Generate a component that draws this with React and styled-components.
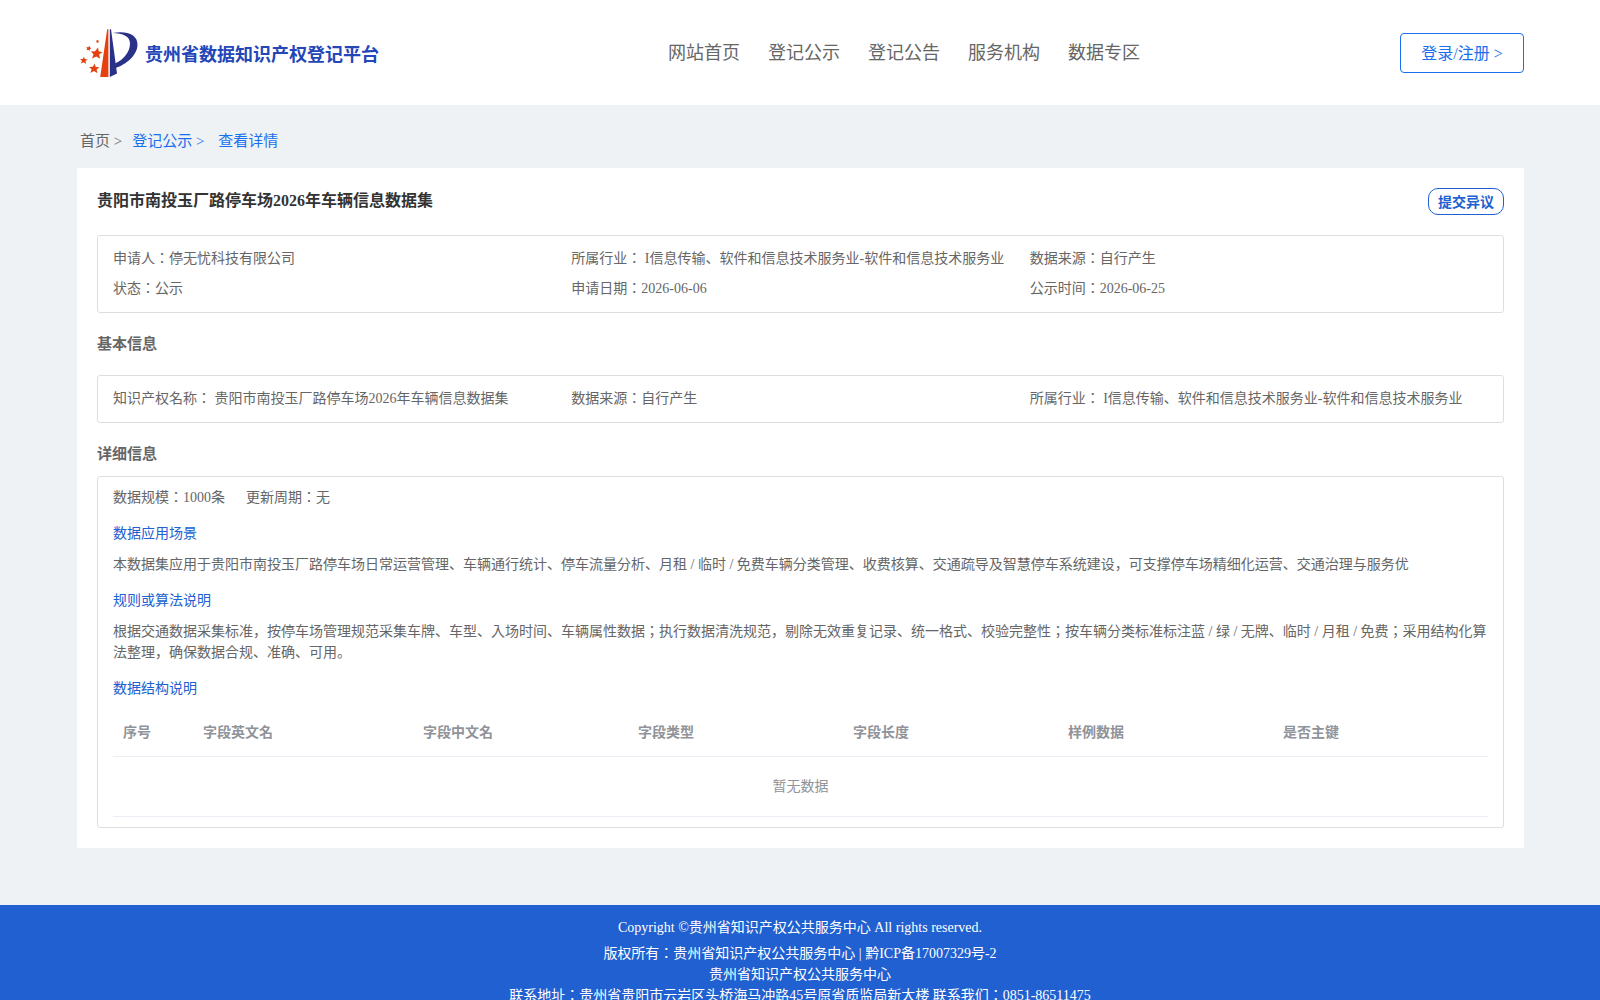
import styled, { createGlobalStyle } from "styled-components";

const navLinks = ["网站首页", "登记公示", "登记公告", "服务机构", "数据专区"];

const industry = "I信息传输、软件和信息技术服务业-软件和信息技术服务业";

const summary = [
  "申请人：停无忧科技有限公司",
  `所属行业： ${industry}`,
  "数据来源：自行产生",
  "状态：公示",
  "申请日期：2026-06-06",
  "公示时间：2026-06-25",
];

const basicInfo = [
  "知识产权名称： 贵阳市南投玉厂路停车场2026年车辆信息数据集",
  "数据来源：自行产生",
  `所属行业： ${industry}`,
];

const columns = [
  { name: "序号", width: "80px" },
  { name: "字段英文名", width: "220px" },
  { name: "字段中文名" },
  { name: "字段类型" },
  { name: "字段长度" },
  { name: "样例数据" },
  { name: "是否主键" },
];

const Logo = () => (
  <LogoSvg viewBox="0 0 58 50" aria-hidden="true">
    <path fill="#e5410f" d="M27.2 1.2 L28.4 1.2 V49 H20.2 Z" />
    <path fill="#2a3188" d="M29.8 1.2 L31 1.2 L37 45.5 L29.8 49 Z" />
    <path
      fill="#2a3188"
      d="M32.500 5 C46 2.500 57.800 6 57.500 17 C57.300 27 46.500 36.500 35.500 40 L35 35.500 C43 32 50 24.500 50 15.500 C50 8 43 5.500 32.500 5 Z"
    />
    <path
      fill="#e5410f"
      d="M18 19.500 L18.700 23.200 L22.500 24.200 L19.200 26.300 L20 30.700 L16.300 28.400 L12 30.500 L13.500 26.200 L10.800 23.600 L15 23.300 Z"
    />
    <path
      fill="#e5410f"
      d="M14.500 35.600 L15.700 39 L19.500 39.200 L16.600 41.500 L17.400 45.200 L14 43.100 L10.400 45 L11.600 41.300 L9 38.900 L12.900 38.800 Z"
    />
    <path
      fill="#e5410f"
      d="M4 28.700 L4.900 31.100 L7.600 31.400 L5.500 33.100 L6 36 L3.500 34.300 L0.800 35.500 L1.900 32.800 L0 30.900 L2.800 30.900 Z"
    />
    <path
      fill="#e5410f"
      d="M9.700 17.800 L10 19.500 L11.600 20.200 L10 21.100 L9.700 23 L8.300 21.700 L6.400 22.200 L7.200 20.500 L6.400 18.900 L8.300 19.200 Z"
    />
    <path fill="#e5410f" d="M17.500 12 L18.900 13 L18.300 14.700 L16.600 14.500 L16.200 12.800 Z" />
  </LogoSvg>
);

const App = () => {
  return (
    <>
      <GlobalStyle />
      <Header>
        <Brand>
          <Logo />
          <BrandName>贵州省数据知识产权登记平台</BrandName>
        </Brand>
        <Nav>
          {navLinks.map((link) => (
            <NavLink href="#" key={link}>
              {link}
            </NavLink>
          ))}
        </Nav>
        <LoginButton type="button">登录/注册 &gt;</LoginButton>
      </Header>

      <Main>
        <Breadcrumb>
          <Crumb href="#">首页 &gt;</Crumb>
          <Crumb href="#" $active>
            登记公示 &gt;&nbsp;
          </Crumb>
          <Crumb href="#" $active>
            查看详情
          </Crumb>
        </Breadcrumb>

        <Card>
          <TitleRow>
            <Title>贵阳市南投玉厂路停车场2026年车辆信息数据集</Title>
            <ObjectionButton type="button">提交异议</ObjectionButton>
          </TitleRow>
          <InfoBox>
            {summary.map((item) => (
              <InfoItem key={item}>{item}</InfoItem>
            ))}
          </InfoBox>

          <SectionTitle $gap="20px">基本信息</SectionTitle>
          <InfoBox>
            {basicInfo.map((item) => (
              <InfoItem key={item}>{item}</InfoItem>
            ))}
          </InfoBox>

          <SectionTitle $gap="11px">详细信息</SectionTitle>
          <DetailBox>
            <Meta>
              <span>数据规模：1000条</span>
              <span>更新周期：无</span>
            </Meta>
            <SubTitle>数据应用场景</SubTitle>
            <Text>
              本数据集应用于贵阳市南投玉厂路停车场日常运营管理、车辆通行统计、停车流量分析、月租 / 临时 / 免费车辆分类管理、收费核算、交通疏导及智慧停车系统建设，可支撑停车场精细化运营、交通治理与服务优
            </Text>
            <SubTitle>规则或算法说明</SubTitle>
            <Text>
              根据交通数据采集标准，按停车场管理规范采集车牌、车型、入场时间、车辆属性数据；执行数据清洗规范，剔除无效重复记录、统一格式、校验完整性；按车辆分类标准标注蓝 / 绿 / 无牌、临时 / 月租 / 免费；采用结构化算法整理，确保数据合规、准确、可用。
            </Text>
            <SubTitle>数据结构说明</SubTitle>
            <Table>
              <thead>
                <tr>
                  {columns.map((col) => (
                    <Th key={col.name} $width={col.width}>
                      {col.name}
                    </Th>
                  ))}
                </tr>
              </thead>
              <tbody>
                <tr>
                  <Empty colSpan={columns.length}>暂无数据</Empty>
                </tr>
              </tbody>
            </Table>
          </DetailBox>
        </Card>
      </Main>

      <Footer>
        <Copyright>Copyright ©贵州省知识产权公共服务中心 All rights reserved.</Copyright>
        <p>版权所有：贵州省知识产权公共服务中心 | 黔ICP备17007329号-2</p>
        <p>贵州省知识产权公共服务中心</p>
        <p>联系地址：贵州省贵阳市云岩区头桥海马冲路45号原省质监局新大楼 联系我们：0851-86511475</p>
      </Footer>
    </>
  );
};

const GlobalStyle = createGlobalStyle`
  * {
    box-sizing: border-box;
  }
  body {
    margin: 0;
    background: #eef2f5;
    color: #666;
    font-family: "Liberation Serif", "Noto Sans CJK JP", "Noto Sans CJK SC", serif;
    font-size: 14px;
    line-height: 21px;
  }
  h1, h2, h3, p {
    margin: 0;
  }
  a {
    text-decoration: none;
  }
  button {
    font-family: inherit;
    background: #fff;
    cursor: pointer;
  }
`;

const Header = styled.header`
  display: flex;
  align-items: center;
  justify-content: space-between;
  height: 105px;
  padding: 0 76px 0 77px;
  background: #fff;
`;

const Brand = styled.div`
  display: flex;
  align-items: center;
  gap: 7px;
  padding-left: 3px;
`;

const LogoSvg = styled.svg`
  width: 58px;
  height: 50px;
`;

const BrandName = styled.div`
  padding-top: 6px;
  color: #2346b8;
  font-size: 18px;
  font-weight: bold;
`;

const Nav = styled.nav`
  display: flex;
  gap: 28px;
  padding-left: 29px;
`;

const NavLink = styled.a`
  color: #666;
  font-size: 18px;
  line-height: 22px;
`;

const LoginButton = styled.button`
  min-width: 124px;
  height: 40px;
  padding: 0 20px 2px;
  border: 1px solid #1a6fee;
  border-radius: 4px;
  color: #1a6fee;
  font-size: 16px;
`;

const Main = styled.main`
  padding: 0 76px 57px 77px;
`;

const Breadcrumb = styled.nav`
  display: flex;
  align-items: center;
  gap: 10px;
  height: 63px;
  padding: 10px 3px 0;
`;

const Crumb = styled.a`
  color: ${(props) => (props.$active ? "#1a6fee" : "#666")};
  font-size: 15px;
`;

const Card = styled.section`
  padding: 20px;
  background: #fff;
`;

const TitleRow = styled.div`
  display: flex;
  justify-content: space-between;
  margin-bottom: 20px;
`;

const Title = styled.h1`
  color: #333;
  font-size: 16px;
  line-height: 26px;
`;

const ObjectionButton = styled.button`
  height: 27px;
  padding: 0 9px 2px;
  border: 1px solid #2060d0;
  border-radius: 10px;
  color: #2060d0;
  font-size: 14px;
  font-weight: bold;
`;

const Box = styled.div`
  border: 1px solid #dcdfe0;
  border-radius: 3px;
`;

const InfoBox = styled(Box)`
  display: grid;
  grid-template-columns: repeat(3, 1fr);
  padding: 8px 15px;
`;

const InfoItem = styled.div`
  line-height: 30px;
`;

const SectionTitle = styled.h2`
  margin: 20px 0 ${(props) => props.$gap};
  font-size: 15px;
  line-height: 22px;
`;

const DetailBox = styled(Box)`
  padding: 10px 15px;
`;

const Meta = styled.div`
  display: flex;
  gap: 21px;
`;

const SubTitle = styled.h3`
  margin: 15px 0 10px;
  color: #2060d0;
  font-size: 14px;
  font-weight: normal;
`;

const Text = styled.p`
  text-align: left;
`;

const Table = styled.table`
  width: 100%;
  table-layout: fixed;
  border-collapse: separate;
  border-spacing: 0;
  color: #909399;
`;

const Th = styled.th`
  width: ${(props) => props.$width || "auto"};
  height: 48px;
  padding: 0 10px;
  border-bottom: 1px solid #ebeef5;
  text-align: left;
`;

const Empty = styled.td`
  height: 60px;
  padding: 0;
  border-bottom: 1px solid #ebeef5;
  text-align: center;
`;

const Footer = styled.footer`
  padding: 12px 0;
  background: #2060d0;
  color: #fff;
  text-align: center;
`;

const Copyright = styled.p`
  margin-bottom: 5px;
`;

export default App;
